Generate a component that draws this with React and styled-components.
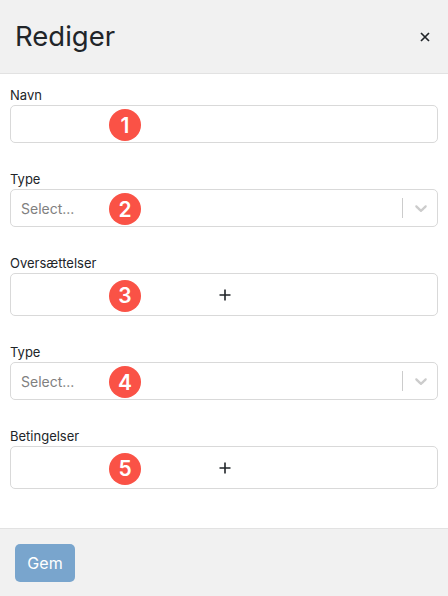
import React from "react";
import styled, { createGlobalStyle } from "styled-components";

const fields = [
  { label: "Navn", kind: "input", badge: 1 },
  { label: "Type", kind: "select", badge: 2 },
  { label: "Oversættelser", kind: "add", badge: 3 },
  { label: "Type", kind: "select", badge: 4 },
  { label: "Betingelser", kind: "add", badge: 5 },
];

const App = () => {
  return (
    <Modal>
      <GlobalStyle />
      <Header>
        <Title>Rediger</Title>
        <CloseButton aria-label="Luk">
          <svg width="10" height="10" viewBox="0 0 10 10">
            <path d="M1 1l8 8M9 1L1 9" stroke="#212529" strokeWidth="1.7" fill="none" />
          </svg>
        </CloseButton>
      </Header>
      <Body>
        {fields.map((field) => (
          <Field key={field.badge}>
            <Label>{field.label}</Label>
            <Control $tall={field.kind === "add"}>
              {field.kind === "select" && (
                <>
                  <Placeholder>Select...</Placeholder>
                  <Separator />
                  <Chevron viewBox="0 0 20 20">
                    <path d="M4.516 7.548c.436-.446 1.043-.481 1.576 0L10 11.295l3.908-3.747c.533-.481 1.141-.446 1.574 0 .436.445.408 1.197 0 1.615-.406.418-4.695 4.502-4.695 4.502a1.095 1.095 0 0 1-1.576 0S4.924 9.581 4.516 9.163s-.436-1.17 0-1.615z" />
                  </Chevron>
                </>
              )}
              {field.kind === "add" && (
                <Plus viewBox="0 0 12 12">
                  <path d="M6 .5v11M.5 6h11" />
                </Plus>
              )}
              <Badge>{field.badge}</Badge>
            </Control>
          </Field>
        ))}
      </Body>
      <Footer>
        <SaveButton>Gem</SaveButton>
      </Footer>
    </Modal>
  );
};

export default App;

const GlobalStyle = createGlobalStyle`
  html, body {
    margin: 0;
    height: 100%;
    overflow: hidden;
    background: #fff;
  }
  * {
    box-sizing: border-box;
  }
`;

const Modal = styled.div`
  display: flex;
  flex-direction: column;
  height: 596px;
  font-family: Inter, "Liberation Sans", sans-serif;
  color: #212529;
`;

const Header = styled.div`
  display: flex;
  align-items: center;
  justify-content: space-between;
  height: 74px;
  padding: 0 18px 0 15px;
  background: #f1f1f1;
  border-bottom: 1px solid #e2e2e2;
`;

const Title = styled.h1`
  margin: 0;
  font-size: 27.5px;
  font-weight: 400;
  line-height: 1.2;
`;

const CloseButton = styled.button`
  display: flex;
  padding: 0;
  border: 0;
  background: none;
`;

const Body = styled.div`
  flex: 1;
  padding: 10px 10px 0;
`;

const Field = styled.div`
  margin-bottom: 25px;
`;

const Label = styled.div`
  padding-top: 1px;
  font-size: 13px;
  line-height: 20px;
`;

const Control = styled.div`
  position: relative;
  display: flex;
  align-items: center;
  justify-content: ${(p) => (p.$tall ? "center" : "flex-start")};
  height: ${(p) => (p.$tall ? "43px" : "38px")};
  padding: 0 10px;
  background: #fff;
  border: 1px solid #d9d9d9;
  border-radius: 5px;
`;

const Placeholder = styled.span`
  flex: 1;
  font-size: 14px;
  color: #808080;
`;

const Separator = styled.span`
  width: 1px;
  height: 20px;
  background: #cccccc;
`;

const Chevron = styled.svg`
  width: 20px;
  height: 20px;
  margin: 0 -4px 0 8px;
  fill: #cccccc;
`;

const Plus = styled.svg`
  width: 12px;
  height: 12px;
  margin-left: 1px;
  stroke: #212529;
  stroke-width: 1.6;
  fill: none;
`;

const Badge = styled.span`
  position: absolute;
  left: 98px;
  top: calc(50% + 1px);
  width: 32px;
  height: 32px;
  transform: translateY(-50%);
  display: flex;
  align-items: center;
  justify-content: center;
  border-radius: 50%;
  background: #fa5246;
  color: #fff;
  font-size: 21px;
  font-weight: 600;
`;

const Footer = styled.div`
  height: 68px;
  padding: 15px;
  background: #f1f1f1;
  border-top: 1px solid #e2e2e2;
`;

const SaveButton = styled.button`
  width: 60px;
  height: 38px;
  padding: 0;
  border: 0;
  border-radius: 5px;
  background: #79a5cd;
  color: #fff;
  font-family: inherit;
  font-size: 16px;
`;
